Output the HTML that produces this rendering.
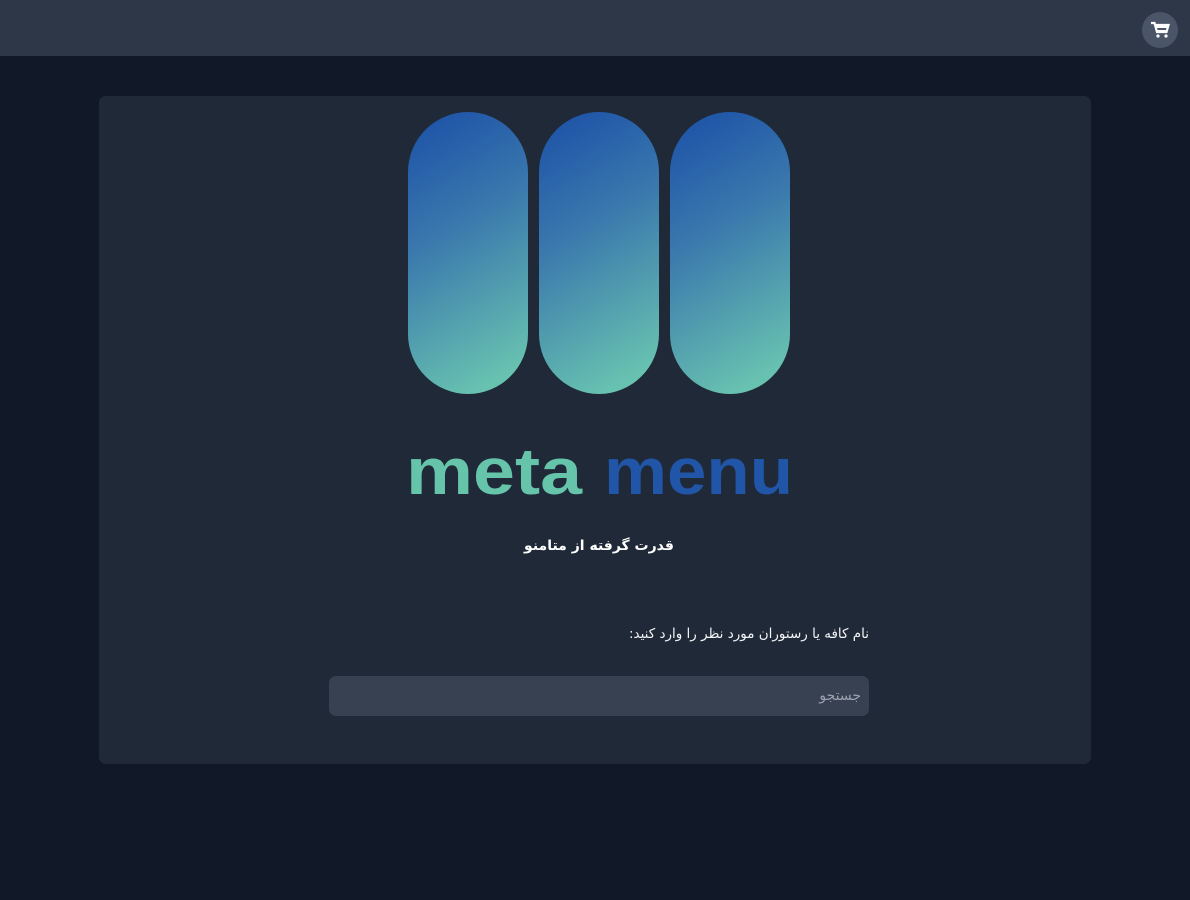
<!DOCTYPE html>
<html><head><meta charset="utf-8"><style>
body{margin:0;width:1190px;height:900px;background:#111827;font-family:"DejaVu Sans","Liberation Sans",sans-serif;overflow:hidden;position:relative}
.top{position:absolute;left:0;top:0;width:1190px;height:56px;background:#2d3748}
.cart{position:absolute;left:1142px;top:12px;width:36px;height:36px;border-radius:50%;background:#4a5568}
.card{position:absolute;left:99px;top:96px;width:992px;height:668px;background:#1f2937;border-radius:7px}
.t1{position:absolute;left:0;width:1198px;top:538px;text-align:center;color:#fff;font-weight:bold;font-size:14px;direction:rtl}
.t2{position:absolute;right:321px;top:626px;color:#f3f4f6;font-size:13.5px;direction:rtl}
.inp{position:absolute;left:329px;top:676px;width:540px;height:40px;background:#374151;border-radius:7px;box-sizing:border-box;padding-right:8px;direction:rtl;color:#9ca3af;font-size:14px;line-height:40px}
</style></head><body>
<div class="top"></div>
<div class="cart"><svg width="36" height="36" viewBox="0 0 36 36"><path d="M9 11h3.5l2.5 9h9.5l2-7H13.5" fill="none" stroke="#fff" stroke-width="2.2"/><rect x="14" y="13" width="12" height="3" fill="#fff"/><rect x="15" y="18" width="10" height="2" fill="#fff"/><circle cx="16" cy="24" r="1.6" fill="#fff"/><circle cx="24" cy="24" r="1.6" fill="#fff"/></svg></div>
<div class="card"></div>
<svg style="position:absolute;left:0;top:0" width="1190" height="520">
<defs><linearGradient id="g" x1="0.3" y1="0" x2="0.55" y2="1"><stop offset="0" stop-color="#1f55a8"/><stop offset="0.4" stop-color="#3a78ad"/><stop offset="1" stop-color="#68c2b0"/></linearGradient></defs>
<rect x="408" y="112" width="120" height="282" rx="60" fill="url(#g)"/>
<rect x="539" y="112" width="120" height="282" rx="60" fill="url(#g)"/>
<rect x="670" y="112" width="120" height="282" rx="60" fill="url(#g)"/>
<text x="406" y="494" font-family="Liberation Sans" font-weight="bold" font-size="66" fill="#66c4aa" textLength="176" lengthAdjust="spacingAndGlyphs">meta</text>
<text x="604" y="494" font-family="Liberation Sans" font-weight="bold" font-size="66" fill="#2155a8" textLength="189" lengthAdjust="spacingAndGlyphs">menu</text>
</svg>
<div class="t1">قدرت گرفته از متامنو</div>
<div class="t2">نام کافه یا رستوران مورد نظر را وارد کنید:</div>
<div class="inp">جستجو</div>
</body></html>
